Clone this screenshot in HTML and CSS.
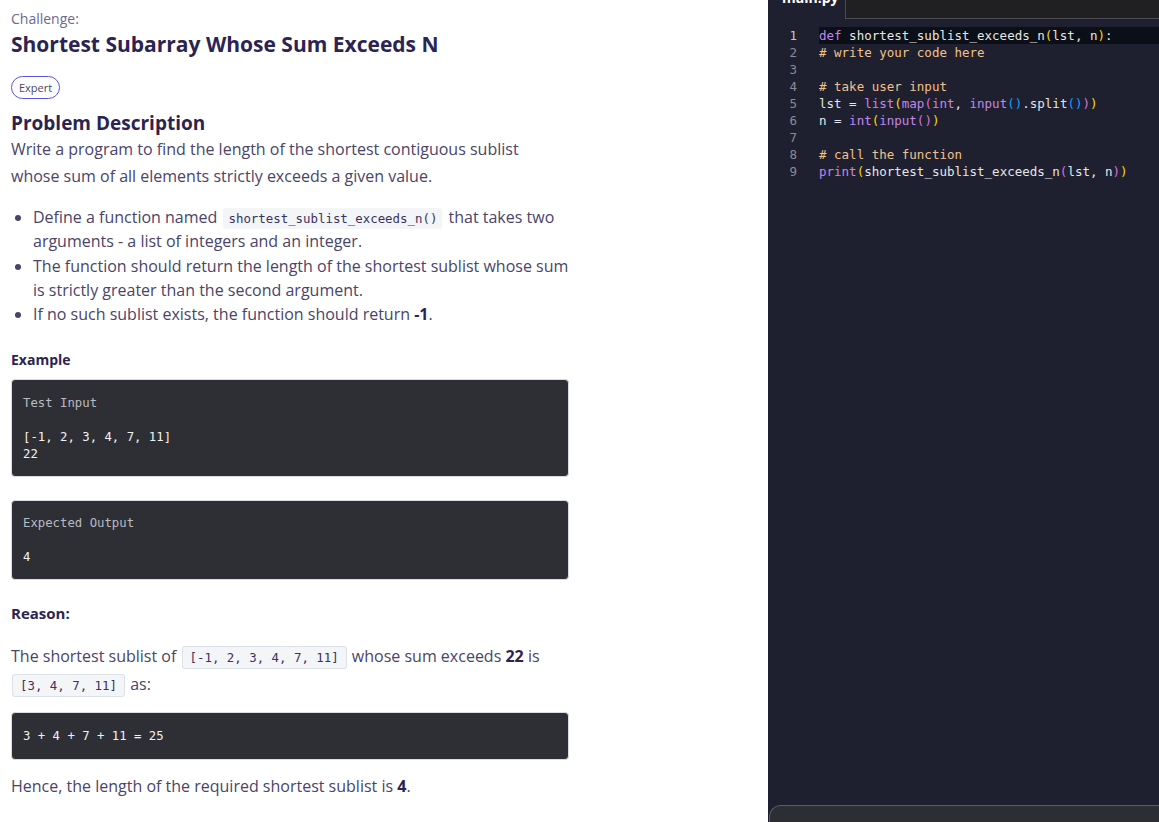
FILE: index.html
```html
<!DOCTYPE html>
<html lang="en">
<head>
<meta charset="utf-8">
<title>Shortest Subarray Whose Sum Exceeds N</title>
<link rel="stylesheet" href="styles.css">
</head>
<body>
<div class="page">
  <main class="problem">
    <div class="challenge-label">Challenge:</div>
    <h1 class="title">Shortest Subarray Whose Sum Exceeds N</h1>
    <span class="badge">Expert</span>
    <h2 class="section-title">Problem Description</h2>
    <p class="intro">Write a program to find the length of the shortest contiguous sublist whose sum of all elements strictly exceeds a given value.</p>
    <ul class="rules">
      <li>Define a function named <code class="inline">shortest_sublist_exceeds_n()</code> that takes two arguments - a list of integers and an integer.</li>
      <li>The function should return the length of the shortest sublist whose sum is strictly greater than the second argument.</li>
      <li>If no such sublist exists, the function should return <b>-1</b>.</li>
    </ul>
    <div class="example-label">Example</div>
    <pre class="block block-input"><span class="muted">Test Input</span>

[-1, 2, 3, 4, 7, 11]
22</pre>
    <pre class="block block-output"><span class="muted">Expected Output</span>

4</pre>
    <div class="reason-label">Reason:</div>
    <p class="reason">The shortest sublist of <code class="inline wide">[-1, 2, 3, 4, 7, 11]</code> whose sum exceeds <b>22</b> is <code class="inline wide">[3, 4, 7, 11]</code> as:</p>
    <pre class="block block-calc">3 + 4 + 7 + 11 = 25</pre>
    <p class="conclusion">Hence, the length of the required shortest sublist is <b>4</b>.</p>
  </main>

  <section class="editor">
    <div class="tabbar">
      <div class="tab">main.py</div>
      <div class="tab-fill"></div>
    </div>
    <div class="code">
      <div class="line active"><span class="ln">1</span><span class="src"><span class="kw">def</span> shortest_sublist_exceeds_n<span class="b1">(</span>lst, n<span class="b1">)</span>:</span></div>
      <div class="line"><span class="ln">2</span><span class="src"><span class="cm"># write your code here</span></span></div>
      <div class="line"><span class="ln">3</span><span class="src"></span></div>
      <div class="line"><span class="ln">4</span><span class="src"><span class="cm"># take user input</span></span></div>
      <div class="line"><span class="ln">5</span><span class="src">lst = <span class="fn">list</span><span class="b1">(</span><span class="fn">map</span><span class="b2">(</span><span class="fn">int</span>, <span class="fn">input</span><span class="b3">()</span>.split<span class="b3">()</span><span class="b2">)</span><span class="b1">)</span></span></div>
      <div class="line"><span class="ln">6</span><span class="src">n = <span class="fn">int</span><span class="b1">(</span><span class="fn">input</span><span class="b2">()</span><span class="b1">)</span></span></div>
      <div class="line"><span class="ln">7</span><span class="src"></span></div>
      <div class="line"><span class="ln">8</span><span class="src"><span class="cm"># call the function</span></span></div>
      <div class="line"><span class="ln">9</span><span class="src"><span class="fn">print</span><span class="b1">(</span>shortest_sublist_exceeds_n<span class="b2">(</span>lst, n<span class="b2">)</span><span class="b1">)</span></span></div>
    </div>
    <div class="console"></div>
  </section>
</div>
</body>
</html>
```

FILE: styles.css
```css
* { box-sizing: border-box; }

html, body {
  margin: 0;
  padding: 0;
  background: #ffffff;
}

body {
  font-family: "Open Sans", "Noto Sans", sans-serif;
  color: #4a4469;
  overflow: hidden;
}

.page {
  display: flex;
  height: 822px;
}

.problem {
  width: 569px;
  padding-left: 11px;
  flex: none;
}

.challenge-label {
  font-size: 14px;
  line-height: 20px;
  margin-top: 9px;
  color: #6e6a8c;
}

.title {
  margin: 0;
  font-size: 21px;
  line-height: 30px;
  font-weight: 700;
  color: #2b2452;
}

.badge {
  display: inline-block;
  margin-top: 17px;
  height: 23px;
  line-height: 21px;
  padding: 0 7px;
  border: 1px solid #5a54e6;
  border-radius: 12px;
  font-size: 11px;
  color: #4a4469;
}

.section-title {
  margin: 11px 0 0;
  font-size: 19px;
  line-height: 26px;
  font-weight: 700;
  color: #2b2452;
}

.intro {
  margin: 0;
  font-size: 16px;
  line-height: 27px;
}

.rules {
  margin: 15px 0 0;
  padding-left: 22px;
  font-size: 16px;
  line-height: 24.3px;
}

b {
  font-weight: 700;
  color: #2b2452;
}

.inline {
  font-family: "DejaVu Sans Mono", "Liberation Mono", monospace;
  font-size: 12.4px;
  line-height: 1;
  color: #3a3360;
  background: #f3f5f7;
  border-radius: 3px;
  padding: 3px 5px;
  margin: 0 2px;
}

.inline.wide {
  border: 1px solid #dbe2ea;
  padding: 3px 7px;
  margin: 0 1px;
}

.example-label {
  margin-top: 24px;
  font-size: 14px;
  line-height: 20px;
  font-weight: 700;
  color: #2b2452;
}

.block {
  margin: 0;
  width: 558px;
  background: #2e2f34;
  border: 1px solid #d7dde5;
  border-radius: 4px;
  color: #f2f2f2;
  font-family: "DejaVu Sans Mono", "Liberation Mono", monospace;
  font-size: 12.3px;
  line-height: 17px;
  padding: 12px 11px;
}

.muted { color: #b9bbc1; }

.block-input {
  margin-top: 9px;
  height: 98px;
  padding-top: 15px;
}

.block-output {
  margin-top: 23px;
  height: 80px;
  padding-top: 14px;
}

.block-calc {
  margin-top: 14px;
  height: 48px;
  padding-top: 15px;
}

.reason-label {
  margin-top: 23px;
  font-size: 15px;
  line-height: 20px;
  font-weight: 700;
  color: #2b2452;
}

.reason {
  margin: 20px 0 0;
  font-size: 16px;
  line-height: 27.5px;
}

.conclusion {
  margin: 13px 0 0;
  font-size: 16px;
  line-height: 27px;
}

/* Editor */
.editor {
  margin-left: auto;
  width: 391px;
  flex: none;
  background: #1e2030;
  display: flex;
  flex-direction: column;
  overflow: hidden;
}

.tabbar {
  height: 19px;
  display: flex;
  flex: none;
}

.tab {
  width: 77px;
  color: #ffffff;
  font-family: "Open Sans", sans-serif;
  font-weight: 700;
  font-size: 14px;
  line-height: 14px;
  margin-top: -9px;
  padding-left: 14px;
}

.tab-fill {
  flex: 1;
  background: #202022;
  border-left: 1px solid #4c4c52;
  border-bottom: 1px solid #4c4c52;
}

.code {
  flex: 1;
  padding-top: 8px;
  font-family: "DejaVu Sans Mono", "Liberation Mono", monospace;
  font-size: 12.5px;
  line-height: 17px;
  color: #e6e6e6;
}

.line {
  display: flex;
  height: 17px;
  white-space: pre;
}

.ln {
  width: 29px;
  flex: none;
  text-align: right;
  color: #8a8c94;
}

.line.active .ln { color: #c8c8c8; }

.src {
  flex: 1;
  margin-left: 22px;
}

.line.active .src { background: #0b0f17; }

.kw { color: #c586e8; }
.fn { color: #c586e8; }
.cm { color: #f2c28a; }
.b1 { color: #ffd700; }
.b2 { color: #da70d6; }
.b3 { color: #179fff; }

.console {
  flex: none;
  height: 17px;
  margin-left: 1px;
  background: #2d2e33;
  border-top: 1px solid #5c5d63;
  border-left: 1px solid #5c5d63;
  border-top-left-radius: 12px;
}
```
